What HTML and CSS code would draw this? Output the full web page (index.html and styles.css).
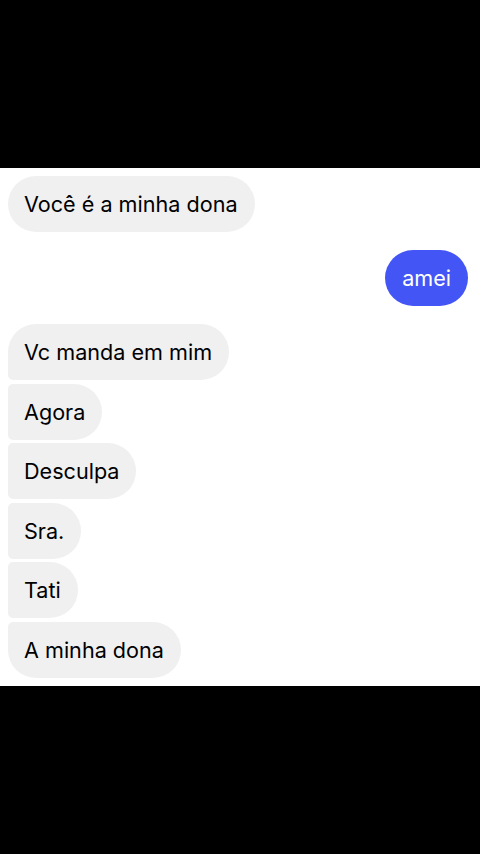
FILE: index.html
```html
<!DOCTYPE html>
<html lang="pt">

<head>
    <meta charset="utf-8">
    <title>Conversa</title>
    <link rel="stylesheet" href="styles.css">
</head>

<body>
    <div class="faixaTopo"></div>
    <div class="conversa">
        <div class="linha">
            <div class="balao">Você é a minha dona</div>
        </div>
        <div class="linha enviada">
            <div class="balao azul">amei</div>
        </div>
        <div class="grupo">
            <div class="balao primeiro">Vc manda em mim</div>
            <div class="balao meio">Agora</div>
            <div class="balao meio">Desculpa</div>
            <div class="balao meio">Sra.</div>
            <div class="balao meio">Tati</div>
            <div class="balao ultimo">A minha dona</div>
        </div>
    </div>
    <div class="faixaBaixo"></div>
</body>

</html>
```

FILE: styles.css
```css
body {
    margin: 0;
    background-color: #000;
    font-family: Inter, "Noto Sans", sans-serif;
}

.faixaTopo {
    height: 168px;
}

.faixaBaixo {
    height: 168px;
}

.conversa {
    background-color: #fff;
    padding: 8px 12px 8px 8px;
    display: flex;
    flex-direction: column;
    gap: 18px;
}

.linha {
    display: flex;
}

.enviada {
    justify-content: flex-end;
}

.balao {
    height: 56px;
    box-sizing: border-box;
    padding: 0 17px 0 16px;
    display: flex;
    align-items: center;
    background-color: #f0f0f0;
    color: #000;
    font-size: 21.6px;
    border-radius: 28px;
    width: fit-content;
}

.azul {
    background-color: #4455f5;
    color: #fff;
    padding: 0 17px;
}

.grupo {
    display: flex;
    flex-direction: column;
    gap: 3.6px;
}

.primeiro {
    border-bottom-left-radius: 5px;
}

.meio {
    border-top-left-radius: 5px;
    border-bottom-left-radius: 5px;
}

.ultimo {
    border-top-left-radius: 5px;
}
```
